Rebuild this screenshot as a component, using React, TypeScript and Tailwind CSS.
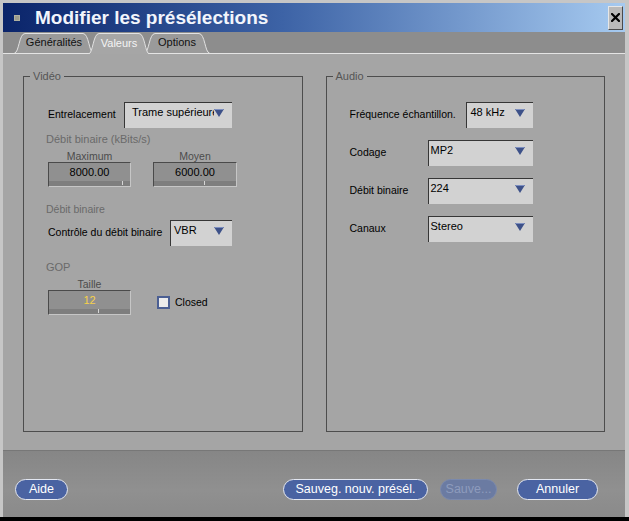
import React from 'react';

// Small drop-down arrow used by every combo box
function Arrow() {
  return (
    <svg width="10" height="8" viewBox="0 0 10 8" className="shrink-0">
      <polygon points="0,0 10,0 5,8" fill="#3d5189" />
      <polyline points="0.5,0.5 9.5,0.5" stroke="#7d8fc0" strokeWidth="1" />
    </svg>
  );
}

interface SelectProps {
  value: string;
  className: string;
  pad?: string;
}

function Select({ value, className, pad = 'pl-[2px]' }: SelectProps) {
  return (
    <div className={`flex h-[26px] items-start bg-[#d2d2d2] border-t border-l border-[#363636] ${className}`}>
      <span className={`flex-1 overflow-hidden whitespace-nowrap pt-[3px] text-[11px] leading-[13px] text-black ${pad}`}>{value}</span>
      <div className="mt-[6px] mr-[8px]">
        <Arrow />
      </div>
    </div>
  );
}

interface NumBoxProps {
  value: string;
  tick: number;
  className: string;
  yellow?: boolean;
}

function NumBox({ value, tick, className, yellow = false }: NumBoxProps) {
  return (
    <div className={`flex h-[25px] flex-col bg-[#909090] border border-[#4a4a4a] border-r-[#c6c6c6] border-b-[#c6c6c6] ${className}`}>
      <div className={`flex-1 text-center text-[11px] leading-[18px] ${yellow ? 'text-[#f7d04a]' : 'text-black'}`}>{value}</div>
      <div className="flex h-[5px] items-start bg-[#7e7e7e]">
        <div style={{ marginLeft: tick }} className="h-[4px] w-px bg-[#d6d6d6]" />
      </div>
    </div>
  );
}

interface TabProps {
  label: string;
  width: number;
  active?: boolean;
}

function Tab({ label, width, active = false }: TabProps) {
  const h = active ? 21 : 20;
  const d = `M0.5,${h} C5,${h} 5,0.5 11,0.5 L${width - 11},0.5 C${width - 5},0.5 ${width - 5},${h} ${width - 0.5},${h}`;
  return (
    <div
      style={{ width }}
      className={`relative -mr-[6px] flex items-center justify-center text-[11px] ${active ? 'z-10 -mb-px h-[21px] text-[#f4f4f4]' : 'h-[20px] text-[#111]'}`}
    >
      <svg className="absolute inset-0" width={width} height={h}>
        <path d={`${d} Z`} fill={active ? '#a6a6a6' : '#9a9a9a'} stroke="none" />
        <path d={d} fill="none" stroke="#e2e2e2" strokeWidth="1" />
      </svg>
      <span className="relative pb-[1px]">{label}</span>
    </div>
  );
}

function cn(...parts: (string | false | undefined)[]) {
  return parts.filter(Boolean).join(' ');
}

function PillButton({ label, className, disabled = false }: { label: string; className: string; disabled?: boolean }) {
  return (
    <div
      className={cn(
        'flex h-[21px] items-center justify-center rounded-full text-[12.5px]',
        disabled
          ? 'bg-[#6b7ba2] border border-[#7a89ad] text-[#8e9bbd]'
          : 'bg-[#4a63a2] border-[1.5px] border-[#e3e7f1] text-white',
        className
      )}
    >
      {label}
    </div>
  );
}

export default function App() {
  return (
    <div className="flex h-[521px] w-[629px] flex-col border-b-[4px] border-black bg-[#c6c6c6] pl-[3px] pr-[4px] pt-[3px] font-['Liberation_Sans',Arial,sans-serif] text-[10.5px]">
      {/* Title bar */}
      <div className="flex h-[29px] shrink-0 items-center bg-[linear-gradient(to_right,#0a246a,#3d63a6_45%,#a6caf0)]">
        <div className="ml-[11px] h-[6px] w-[6px] bg-[#9c9c8c] border border-[#b0b0a0]" />
        <div className="ml-[15px] flex-1 text-[19px] font-bold leading-none text-[#f2f5fc]">Modifier les présélections</div>
        <div className="mr-[2px] flex h-[24px] w-[15px] items-center justify-center bg-[#b9b9b9] border border-[#e6e6e6] border-r-[#4a4a4a] border-b-[#4a4a4a]">
          <svg width="9" height="9" viewBox="0 0 9 9">
            <path d="M1,1 L8,8 M8,1 L1,8" stroke="#000" strokeWidth="2.2" strokeLinecap="square" />
          </svg>
        </div>
      </div>

      {/* Tabs */}
      <div className="flex h-[22px] shrink-0 items-end border-b border-[#e4e4e4] bg-[#8d8d8d] pl-[11px]">
        <Tab label="Généralités" width={80} />
        <Tab label="Valeurs" width={62} active />
        <Tab label="Options" width={66} />
      </div>

      {/* Page */}
      <div className="grid flex-1 grid-cols-2 gap-[23px] border-b border-[#777] bg-[#a5a5a5] px-[20px] pb-[17px] pt-[16px]">
        {/* Vidéo */}
        <fieldset className="h-[362px] min-w-0 border border-[#4d4d4d]">
          <legend className="ml-[6px] px-[3px] text-[11px] leading-[13px] text-[#555]">Vidéo</legend>
          <div className="flex flex-col pl-[22px] pt-[19px]">
            <div className="ml-[2px] flex items-center">
              <span className="w-[76px] text-black">Entrelacement</span>
              <Select value="Trame supérieure" className="w-[108px]" pad="pl-[7px]" />
            </div>
            <div className="mt-[5px] text-[11px] leading-[13px] text-[#6a6a6a]">Débit binaire (kBits/s)</div>
            <div className="ml-[2px] mt-[5px] flex gap-[22px]">
              <div className="flex w-[83px] flex-col items-center">
                <span className="leading-[11px] text-[#4c4c4c]">Maximum</span>
                <NumBox value="8000.00" tick={73} className="w-[83px]" />
              </div>
              <div className="flex w-[84px] flex-col items-center">
                <span className="leading-[11px] text-[#4c4c4c]">Moyen</span>
                <NumBox value="6000.00" tick={50} className="w-[84px]" />
              </div>
            </div>
            <div className="mt-[16px] leading-[13px] text-[#6a6a6a]">Débit binaire</div>
            <div className="ml-[2px] mt-[4px] flex items-center">
              <span className="w-[122px] text-black">Contrôle du débit binaire</span>
              <Select value="VBR" className="w-[62px]" pad="pl-[3px]" />
            </div>
            <div className="mt-[15px] text-[11px] leading-[13px] text-[#6a6a6a]">GOP</div>
            <div className="ml-[2px] mt-[5px] flex items-end">
              <div className="flex w-[83px] flex-col items-center">
                <span className="leading-[11px] text-[#4c4c4c]">Taille</span>
                <NumBox value="12" tick={49} className="w-[83px]" yellow />
              </div>
              <div className="ml-[26px] flex h-[25px] items-center gap-[5px]">
                <div className="h-[13px] w-[13px] border-2 border-[#4b5f93] bg-[#ececec]" />
                <span className="text-black">Closed</span>
              </div>
            </div>
          </div>
        </fieldset>

        {/* Audio */}
        <fieldset className="h-[362px] min-w-0 border border-[#4d4d4d]">
          <legend className="ml-[6px] px-[3px] text-[11px] leading-[13px] text-[#555]">Audio</legend>
          <div className="flex flex-col gap-[12px] pl-[23px] pt-[19px]">
            <div className="flex items-center">
              <span className="w-[116px] text-black">Fréquence échantillon.</span>
              <Select value="48 kHz" className="w-[67px]" pad="pl-[4px]" />
            </div>
            <div className="flex items-center">
              <span className="w-[78px] text-black">Codage</span>
              <Select value="MP2" className="w-[105px]" />
            </div>
            <div className="flex items-center">
              <span className="w-[78px] text-black">Débit binaire</span>
              <Select value="224" className="w-[105px]" />
            </div>
            <div className="flex items-center">
              <span className="w-[78px] text-black">Canaux</span>
              <Select value="Stereo" className="w-[105px]" />
            </div>
          </div>
        </fieldset>
      </div>

      {/* Buttons */}
      <div className="flex h-[66px] shrink-0 items-start bg-[linear-gradient(to_bottom,#868686,#909090_60%,#8a8a8a)] pl-[12px] pr-[27px] pt-[28px]">
        <PillButton label="Aide" className="w-[53px]" />
        <div className="ml-auto flex">
          <PillButton label="Sauveg. nouv. présél." className="w-[145px]" />
          <PillButton label="Sauve..." className="ml-[12px] w-[57px]" disabled />
          <PillButton label="Annuler" className="ml-[20px] w-[81px]" />
        </div>
      </div>
    </div>
  );
}
